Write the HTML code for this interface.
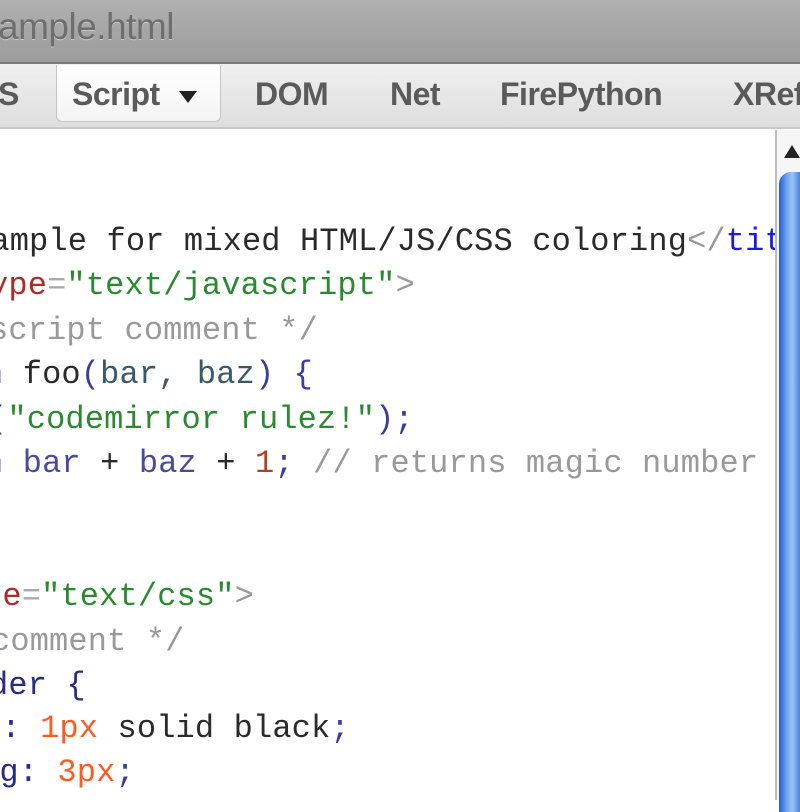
<!DOCTYPE html>
<html><head><meta charset="utf-8"><style>
body{margin:0;width:800px;height:800px;overflow:hidden;background:#fff;position:relative;font-family:"Liberation Sans",sans-serif}
#title{position:absolute;left:0;top:0;width:800px;height:62px;background:linear-gradient(#b0b0b0,#9c9c9c);border-bottom:2px solid #7a7a7a}
#title span{position:absolute;left:-2px;top:6px;font-size:37px;color:#6e6e6e;text-shadow:0 1px 0 #c8c8c8;letter-spacing:-0.5px}
#tb{position:absolute;left:0;top:64px;width:800px;height:63px;background:linear-gradient(#f0f0f0,#dedede);border-bottom:2px solid #c8c8c8}
.t{position:absolute;top:12px;font-size:32px;font-weight:bold;color:#5a5a5a;letter-spacing:-0.5px}
#sel{position:absolute;left:56px;top:1px;width:163px;height:56px;background:linear-gradient(#fff,#f4f4f4);border:1px solid #c4c4c4;border-top:none;border-radius:0 0 6px 6px}
.l{position:absolute;white-space:pre;font-family:"Liberation Mono","DejaVu Sans Mono",monospace;font-size:32px;line-height:44px;color:#2a2a2a;letter-spacing:0.15px}
.tg{color:#1a1aee}.at{color:#b02a2a}.eq{color:#aaa}.st{color:#2a8a30}.cm{color:#999}.p{color:#3a3aa8}.v{color:#3a5a6a}.v2{color:#4a4aa0}.n{color:#b04020}.o{color:#ff5a20}.k{color:#2a2a88}.g{color:#999}
#sb{position:absolute;left:775px;top:130px;width:25px;height:670px;background:#f6f6f6;border-left:2px solid #bdbdbd}
#th{position:absolute;left:779px;top:172px;width:24px;height:640px;border-radius:12px 0 0 0;background:linear-gradient(90deg,#1f5ed0,#6aa0ee 30%,#9cc4f4 55%,#5a94e6 80%,#2a66d6)}
</style></head><body>
<div id="title"><span>ample.html</span></div>
<div id="tb">
<div id="sel"></div>
<div class="t" style="left:-2px">S</div>
<div class="t" style="left:72px">Script</div>
<div style="position:absolute;left:179px;top:27px;width:0;height:0;border-left:9px solid transparent;border-right:9px solid transparent;border-top:12px solid #222"></div>
<div class="t" style="left:255px">DOM</div>
<div class="t" style="left:390px">Net</div>
<div class="t" style="left:500px">FirePython</div>
<div class="t" style="left:733px">XRef</div>
</div>
<div class="l" style="left:-29px;top:220px">xample for mixed HTML/JS/CSS coloring<span class="g">&lt;/</span><span class="tg">title&gt;</span></div>
<div class="l" style="left:-11px;top:264px"><span class="at">ype</span><span class="eq">=</span><span class="st">"text/javascript"</span><span class="g">&gt;</span></div>
<div class="l cm" style="left:-11px;top:309px">script comment */</div>
<div class="l" style="left:-16px;top:353px"><span class="p">n</span> foo<span class="p">(</span><span class="v">bar, baz</span><span class="p">) {</span></div>
<div class="l" style="left:-12px;top:398px"><span class="p">(</span><span class="st">"codemirror rulez!"</span><span class="p">);</span></div>
<div class="l" style="left:-16px;top:442px"><span class="p">n</span> <span class="v2">bar</span> + <span class="v2">baz</span> + <span class="n">1</span><span class="p">;</span> <span class="cm">// returns magic number</span></div>
<div class="l" style="left:-17px;top:575px"><span class="at">pe</span><span class="eq">=</span><span class="st">"text/css"</span><span class="g">&gt;</span></div>
<div class="l cm" style="left:-9px;top:620px">comment */</div>
<div class="l k" style="left:-11px;top:664px">der {</div>
<div class="l" style="left:-18px;top:707px"><span class="k">r:</span> <span class="o">1px</span> solid black<span class="p">;</span></div>
<div class="l" style="left:-20px;top:751px"><span class="k">ng:</span> <span class="o">3px</span><span class="p">;</span></div>
<div id="sb"></div>
<div style="position:absolute;left:784px;top:145px;width:0;height:0;border-left:8px solid transparent;border-right:8px solid transparent;border-bottom:13px solid #222"></div>
<div id="th"></div>
</body></html>
